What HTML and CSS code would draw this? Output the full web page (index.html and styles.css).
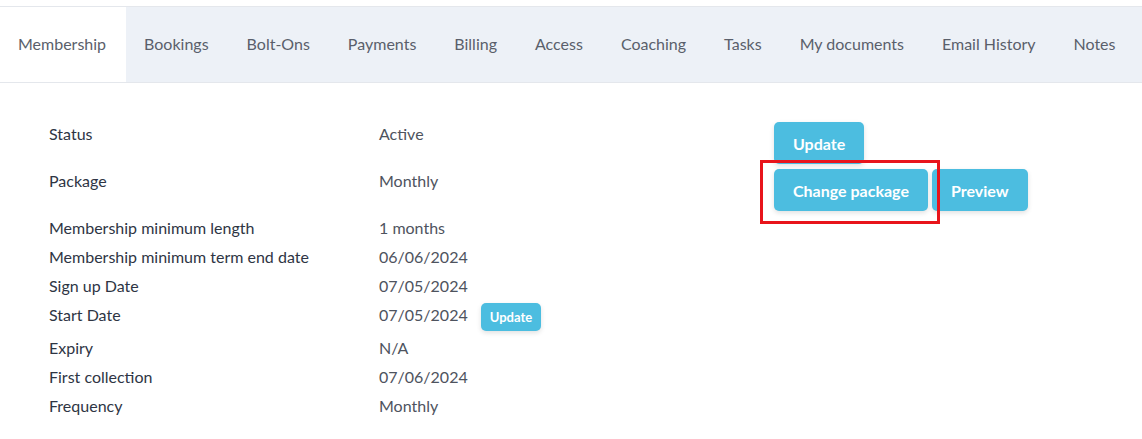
FILE: index.html
```html
<!DOCTYPE html>
<html>
  <head>
    <title>Membership</title>
    <link rel="stylesheet" href="styles.css">
  </head>
  <body>
    <div class="tabBar">
      <a class="tab isActive">Membership</a>
      <a class="tab">Bookings</a>
      <a class="tab">Bolt-Ons</a>
      <a class="tab">Payments</a>
      <a class="tab">Billing</a>
      <a class="tab">Access</a>
      <a class="tab">Coaching</a>
      <a class="tab">Tasks</a>
      <a class="tab">My documents</a>
      <a class="tab">Email History</a>
      <a class="tab">Notes</a>
    </div>

    <div class="details">
      <div class="label">Status</div>
      <div class="value">Active</div>
      <div class="actions">
        <button class="btn">Update</button>
      </div>

      <div class="label">Package</div>
      <div class="value">Monthly</div>
      <div class="actions">
        <button class="btn">Change package</button>
        <button class="btn">Preview</button>
        <span class="highlight"></span>
      </div>

      <div class="label">Membership minimum length</div>
      <div class="value">1 months</div>
      <div></div>

      <div class="label">Membership minimum term end date</div>
      <div class="value">06/06/2024</div>
      <div></div>

      <div class="label">Sign up Date</div>
      <div class="value">07/05/2024</div>
      <div></div>

      <div class="label">Start Date</div>
      <div class="value">07/05/2024 <button class="btn btnSmall">Update</button></div>
      <div></div>

      <div class="label">Expiry</div>
      <div class="value">N/A</div>
      <div></div>

      <div class="label">First collection</div>
      <div class="value">07/06/2024</div>
      <div></div>

      <div class="label">Frequency</div>
      <div class="value">Monthly</div>
      <div></div>
    </div>
  </body>
</html>
```

FILE: styles.css
```css
body {
  margin: 0;
  font-family: Lato, "Open Sans", sans-serif;
  font-size: 16px;
  color: #333a48;
  background-color: white;
}
.tabBar {
  display: flex;
  margin-top: 6px;
  height: 75px;
  background-color: #edf1f7;
  border-top: 1px solid #e4e7ec;
  border-bottom: 1px solid #e4e7ec;
}
.tab {
  padding: 0 20px 0 18px;
  line-height: 73px;
  color: #5a5f6b;
  cursor: pointer;
}
.tab.isActive {
  background-color: white;
}
.details {
  display: grid;
  grid-template-columns: 330px 395px auto;
  row-gap: 5px;
  align-items: start;
  padding: 39px 0 0 49px;
}
.label {
  line-height: 24px;
  color: #2e3544;
}
.value {
  line-height: 24px;
  color: #4e535e;
  display: flex;
  align-items: flex-start;
}
.actions {
  position: relative;
  display: flex;
  gap: 4px;
}
.btn {
  border: none;
  background-color: #4cbde0;
  color: white;
  font-family: Lato, "Open Sans", sans-serif;
  font-weight: bold;
  font-size: 16px;
  height: 42px;
  padding: 0 19px;
  border-radius: 5px;
  box-shadow: 0 2px 5px rgba(0, 0, 0, 0.12);
  cursor: pointer;
}
.btnSmall {
  height: 28px;
  font-size: 13px;
  padding: 0 9px;
  margin-left: 13px;
}
.highlight {
  position: absolute;
  left: -14px;
  top: -9px;
  width: 174px;
  height: 58px;
  border: 3px solid #e8141b;
}
```
